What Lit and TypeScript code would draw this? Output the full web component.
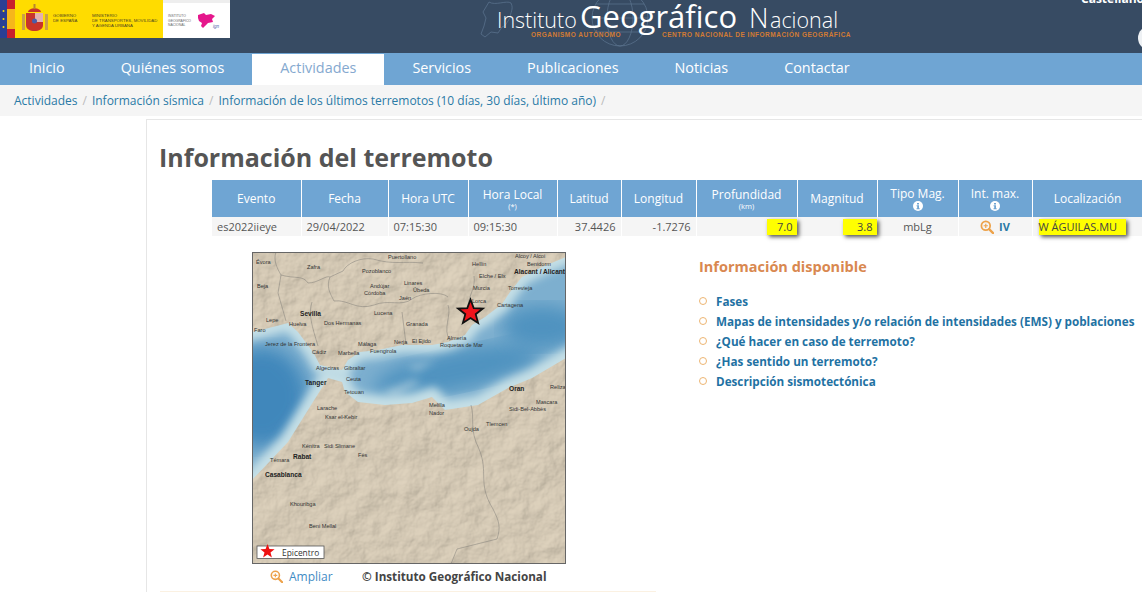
import { LitElement, html, css, svg } from 'lit';
import { customElement } from 'lit/decorators.js';

const NAV = ['Inicio', 'Quiénes somos', 'Actividades', 'Servicios', 'Publicaciones', 'Noticias', 'Contactar'];
const LINKS = [
  'Fases',
  'Mapas de intensidades y/o relación de intensidades (EMS) y poblaciones',
  '¿Qué hacer en caso de terremoto?',
  '¿Has sentido un terremoto?',
  'Descripción sismotectónica',
];
const CRUMBS = ['Actividades', 'Información sísmica', 'Información de los últimos terremotos (10 días, 30 días, último año)'];

// name, x, baseline, bold
const PLACES: [string, number, number, boolean?][] = [
  ['Évora', 4, 12], ['Zafra', 55, 17], ['Puertollano', 136, 7], ['Pozoblanco', 110, 21],
  ['Hellín', 220, 14], ['Alcoy / Alcoi', 263, 6], ['Benidorm', 275, 14], ['Elche / Elx', 227, 26],
  ['Alacant / Alicante', 262, 22, true], ['Beja', 5, 36], ['Andújar', 118, 36], ['Linares', 152, 33],
  ['Úbeda', 161, 40], ['Córdoba', 112, 43], ['Murcia', 221, 38], ['Torrevieja', 256, 38],
  ['Jaén', 147, 48], ['Lorca', 220, 51], ['Cartagena', 245, 55], ['Sevilla', 48, 64, true],
  ['Lucena', 122, 63], ['Dos Hermanas', 72, 73], ['Lepe', 14, 70], ['Huelva', 37, 74], ['Faro', 2, 80],
  ['Granada', 154, 74], ['Almería', 195, 88], ['Nerja', 142, 92], ['El Ejido', 160, 91],
  ['Roquetas de Mar', 188, 95], ['Jerez de la Frontera', 13, 94], ['Málaga', 106, 94], ['Cádiz', 60, 102],
  ['Marbella', 86, 103], ['Fuengirola', 118, 101], ['Algeciras', 64, 118], ['Gibraltar', 92, 118],
  ['Tanger', 53, 133, true], ['Ceuta', 94, 129], ['Tetouan', 92, 142], ['Oran', 257, 139, true],
  ['Relizane', 298, 137], ['Melilla', 177, 155], ['Nador', 177, 163], ['Mascara', 284, 152],
  ['Sidi-Bel-Abbès', 257, 159], ['Larache', 65, 158], ['Ksar el-Kebir', 73, 167], ['Tlemcen', 234, 174],
  ['Oujda', 212, 179], ['Kénitra', 50, 196], ['Sidi Slimane', 72, 196], ['Rabat', 41, 207, true],
  ['Fès', 106, 205], ['Témara', 18, 210], ['Casablanca', 13, 225, true], ['Khouribga', 38, 254],
  ['Beni Mellal', 57, 276],
];

const SPAIN = '0,80 13,77 36,71 46,80 61,100 68,113 90,118 96,108 108,100 126,98 150,93 180,93 196,90 213,83 220,73 233,65 250,52 258,40 270,25 290,15 314,5 314,0 0,0';
const AFRICA = '0,228 36,190 61,150 76,126 90,130 93,140 106,150 133,153 160,151 180,145 193,158 226,153 256,136 280,126 314,106 314,312 0,312';

function starPoints(cx: number, cy: number, r: number) {
  const pts: string[] = [];
  for (let i = 0; i < 10; i++) {
    const rad = i % 2 ? r * 0.42 : r;
    const a = -Math.PI / 2 + (i * Math.PI) / 5;
    pts.push(`${(cx + rad * Math.cos(a)).toFixed(1)},${(cy + rad * Math.sin(a)).toFixed(1)}`);
  }
  return pts.join(' ');
}

const zoomIcon = (size: number) => html`<svg width=${size} height=${size} viewBox="0 0 16 16" fill="none" stroke="#eda24a">
  <circle cx="6.6" cy="6.6" r="5" stroke-width="2"></circle>
  <path d="M10.4 10.4 15 15" stroke-width="2.6" stroke-linecap="round"></path>
  <path d="M4.2 6.6h4.8M6.6 4.2V9" stroke-width="1.3"></path>
</svg>`;

const infoIcon = html`<svg class="info" width="10" height="10" viewBox="0 0 10 10">
  <circle cx="5" cy="5" r="5" fill="#fff"></circle>
  <path d="M4 2h2v1.5H4zM3.6 4.3H6v3h.7v1H3.5v-1h.7v-2h-.6z" fill="#6fa5d3"></path>
</svg>`;

@customElement('app-root')
export class AppRoot extends LitElement {
  static styles = css`
    :host {
      display: block;
      width: 1142px;
      height: 592px;
      overflow: hidden;
      background: #fff;
      font-family: 'Open Sans', 'Liberation Sans', sans-serif;
      color: #555;
    }

    .top {
      height: 53px;
      background: #374b63;
      display: flex;
      overflow: hidden;
    }

    .logo {
      width: 230px;
      height: 38px;
      flex: none;
      display: block;
    }

    .logo text {
      font-family: 'Liberation Sans', sans-serif;
    }

    .brand {
      flex: none;
      width: 420px;
      height: 53px;
      margin-left: 250px;
      display: block;
    }

    .lang {
      margin-left: auto;
      width: 61px;
      flex: none;
      color: #fff;
      font-size: 12px;
      font-weight: 700;
      line-height: 12px;
      margin-top: -7px;
      white-space: nowrap;
    }

    .globe {
      display: block;
      margin: 21px 0 0 57px;
      width: 12px;
      height: 24px;
      border-radius: 12px 0 0 12px;
      border-left: 4px solid #eef1f4;
      box-sizing: border-box;
    }

    nav {
      height: 32px;
      background: #6fa5d3;
      display: flex;
      padding-left: 1px;
    }

    nav a {
      padding: 0 28px;
      margin-top: 1px;
      height: 31px;
      line-height: 28px;
      font-size: 14.4px;
      color: #fff;
    }

    nav a.on {
      background: #fff;
      color: #85a9cf;
    }

    .crumbs {
      height: 31px;
      background: #f5f5f5;
      display: flex;
      align-items: center;
      padding-left: 14px;
      font-size: 12px;
      color: #2a7aa6;
      white-space: nowrap;
    }

    .crumbs i {
      font-style: normal;
      color: #bbb;
      padding: 0 5px;
    }

    .card {
      margin: 3px 0 0 146px;
      border-top: 1px solid #e6e6e6;
      border-left: 1px solid #e6e6e6;
      padding: 0 0 0 12px;
      height: 473px;
      box-sizing: border-box;
      position: relative;
    }

    h1 {
      margin: 0;
      padding-top: 21px;
      font-size: 25px;
      line-height: 32px;
      font-weight: 700;
      color: #555;
      height: 39px;
      white-space: nowrap;
    }

    table {
      margin: 0 0 0 53px;
      table-layout: fixed;
      width: 931px;
      border-collapse: collapse;
      font-size: 11px;
    }

    th {
      height: 37px;
      padding: 0;
      background: #6fa5d3;
      color: #fff;
      font-weight: 400;
      font-size: 12px;
      line-height: 15px;
      border-right: 1px solid #fff;
      text-align: center;
      vertical-align: middle;
    }

    th small {
      display: block;
      font-size: 7.5px;
      line-height: 9px;
    }

    .info {
      display: block;
      margin: 0 auto;
    }

    td {
      height: 19px;
      padding: 0 5px;
      background: #f5f5f5;
      border-right: 1px solid #fff;
      color: #555;
      line-height: 19px;
      white-space: nowrap;
      box-sizing: border-box;
    }

    td.num {
      text-align: right;
    }

    td.mid {
      text-align: center;
    }

    td.hl {
      padding: 0;
      text-align: right;
      line-height: 16px;
      overflow: visible;
    }

    .mark {
      display: inline-block;
      background: #ffff00;
      box-shadow: 2px 2px 4px #555;
      height: 16px;
      line-height: 16px;
      padding: 0 4px 0 10px;
      color: #444;
      vertical-align: middle;
    }

    .mark.wide {
      padding: 0 9px 0 0;
      margin-left: 6px;
    }

    td.hl.left {
      text-align: left;
    }

    .int {
      display: flex;
      align-items: center;
      justify-content: center;
      gap: 5px;
      font-weight: 700;
      color: #2a7aa6;
    }

    .body {
      display: flex;
      margin-top: 16px;
    }

    .left {
      width: 497px;
      flex: none;
      padding-left: 93px;
      box-sizing: border-box;
    }

    .map {
      display: block;
      width: 314px;
      height: 312px;
      box-sizing: content-box;
    }

    .map text {
      font-family: 'Liberation Sans', sans-serif;
      font-size: 5.6px;
      fill: #333;
    }

    .map text.b {
      font-weight: 700;
      font-size: 6.6px;
      fill: #222;
    }

    .map text.legend {
      font-family: 'Open Sans', sans-serif;
      font-size: 8.4px;
    }

    .caption {
      display: flex;
      align-items: center;
      margin: 2px 0 0 18px;
      height: 20px;
      font-size: 12px;
    }

    .caption a {
      color: #3f8cc4;
      margin-left: 6px;
      width: 73px;
    }

    .caption b {
      color: #444;
      font-size: 11.7px;
    }

    .side {
      padding-left: 43px;
      white-space: nowrap;
    }

    h2 {
      margin: 4px 0 0;
      font-size: 14.5px;
      line-height: 22px;
      font-weight: 700;
      color: #d98850;
    }

    ul {
      list-style: none;
      margin: 13px 0 0;
      padding: 0;
    }

    li {
      height: 20px;
      display: flex;
      align-items: center;
      font-size: 11.7px;
      font-weight: 700;
      color: #1f72a3;
    }

    li::before {
      content: '';
      width: 8px;
      height: 8px;
      box-sizing: border-box;
      border: 1.5px solid #edb572;
      border-radius: 50%;
      margin-right: 9px;
    }

    .rule {
      position: absolute;
      left: 13px;
      bottom: 0;
      width: 496px;
      height: 1px;
      background: #fbf1e2;
    }
  `;

  renderLogo() {
    return html`<svg class="logo" viewBox="0 0 230 38">
      <rect width="230" height="38" fill="#fff"></rect>
      <rect y="0" x="163" width="67" height="3" fill="#eee"></rect>
      <rect width="163" height="38" fill="#ffdc00"></rect>
      <rect width="7" height="38" fill="#2b3f94"></rect>
      <rect x="7" width="8" height="38" fill="#c8202d"></rect>
      <rect x="7" y="9" width="8" height="20" fill="#f6b61b"></rect>
      <g fill="#ffdc00">
        <circle cx="3.5" cy="11" r="1"></circle><circle cx="3.5" cy="19" r="1"></circle><circle cx="3.5" cy="27" r="1"></circle>
      </g>
      <rect x="22" y="14" width="3" height="16" fill="#c9a04b"></rect>
      <rect x="45" y="14" width="3" height="16" fill="#c9a04b"></rect>
      <path d="M26 13h17v12c0 4-4 6-8.500 6S26 29 26 25z" fill="#c8342b"></path>
      <path d="M35 13h8v9h-8z" fill="#e3b0b0"></path>
      <circle cx="34.500" cy="21" r="2.500" fill="#4a5ca8"></circle>
      <path d="M28 12c1-5 12-5 13 0z" fill="#c8342b"></path>
      <rect x="33.500" y="4" width="2" height="5" fill="#b8862d"></rect>
      <g fill="#4b4320" font-size="4.300">
        <text x="53" y="17">GOBIERNO</text>
        <text x="53" y="22">DE ESPAÑA</text>
        <text x="92" y="17">MINISTERIO</text>
        <text x="92" y="22">DE TRANSPORTES, MOVILIDAD</text>
        <text x="92" y="27">Y AGENDA URBANA</text>
      </g>
      <g fill="#666" font-size="3.400">
        <text x="168" y="17">INSTITUTO</text>
        <text x="168" y="21.500">GEOGRÁFICO</text>
        <text x="168" y="26">NACIONAL</text>
      </g>
      <path d="M198 15l6-2 2 2 5-1 4 2-3 3 1 3-5 1-3 3-2 2-2-2 1-3-3-2-1-3z" fill="#e5178c"></path>
      <text x="213" y="28" fill="#4a5ca8" font-size="4.500" font-style="italic">ign</text>
    </svg>`;
  }

  renderBrand() {
    return html`<svg class="brand" viewBox="0 0 420 53">
      <g fill="none" stroke="#5d7690" stroke-width="0.700">
        <path d="M9 2c6 4 18-2 22 1 3 6-1 10-1 15-3 4-4 8-8 9l-4 6-7-1-6 5-4-3 3-8 2-8-3-6z"></path>
        <circle cx="140" cy="18" r="28"></circle>
        <ellipse cx="140" cy="18" rx="13" ry="28"></ellipse>
        <path d="M112 18h56M116 4h48M116 32h48"></path>
      </g>
      <g fill="#fff" font-family="Open Sans, sans-serif" font-weight="300">
        <text x="17" y="28" font-size="21.500">Instituto</text>
        <text x="100" y="28" font-size="31" font-weight="400">Geográfico</text>
        <text x="269" y="28" font-size="27">N</text>
        <text x="290" y="28" font-size="21.500">acional</text>
      </g>
      <g fill="#d27b34" font-family="Liberation Sans, sans-serif" font-weight="700" font-size="6.500" letter-spacing="0.500">
        <text x="51" y="36.500">ORGANISMO AUTÓNOMO</text>
        <text x="182" y="36.500">CENTRO NACIONAL  DE  INFORMACIÓN  GEOGRÁFICA</text>
      </g>
    </svg>`;
  }

  renderMap() {
    return html`<svg class="map" viewBox="0 0 314 312">
      <defs>
        <filter id="relief" x="0" y="0" width="1" height="1">
          <feTurbulence type="fractalNoise" baseFrequency="0.04" numOctaves="5" seed="7" result="n"></feTurbulence>
          <feDiffuseLighting in="n" surfaceScale="2.600" diffuseConstant="1.100" lighting-color="#d6cab6" result="l">
            <feDistantLight azimuth="225" elevation="62"></feDistantLight>
          </feDiffuseLighting>
          <feComposite in="l" in2="SourceAlpha" operator="in"></feComposite>
        </filter>
        <filter id="soft"><feGaussianBlur stdDeviation="4"></feGaussianBlur></filter>
        <filter id="softer"><feGaussianBlur stdDeviation="9"></feGaussianBlur></filter>
        <clipPath id="frame"><rect width="314" height="312"></rect></clipPath>
      </defs>
      <g clip-path="url(#frame)">
        <rect width="314" height="312" fill="#7dafcf"></rect>
        <ellipse cx="10" cy="145" rx="45" ry="50" fill="#3f87bb" filter="url(#softer)"></ellipse>
        <ellipse cx="205" cy="118" rx="85" ry="20" fill="#4f93c0" filter="url(#softer)" transform="rotate(-12 205 118)"></ellipse>
        <ellipse cx="290" cy="75" rx="40" ry="22" fill="#4f93c0" filter="url(#softer)"></ellipse>
        <path d="M130 140l30-12 10 2-28 16zM155 115l30-8-20 12z" fill="#b6d3e0" opacity="0.700" filter="url(#soft)"></path>
        <polygon points=${SPAIN} fill="none" stroke="#c5dfe6" stroke-width="16" filter="url(#soft)"></polygon>
        <polygon points=${AFRICA} fill="none" stroke="#c5dfe6" stroke-width="18" filter="url(#soft)"></polygon>
        <polygon points=${SPAIN} fill="#d6cab6" filter="url(#relief)"></polygon>
        <polygon points=${AFRICA} fill="#d6cab6" filter="url(#relief)"></polygon>
        <g fill="none" stroke="#6b6b68" stroke-width="0.500" opacity="0.800">
          <path d="M24 0c-3 8 1 16 5 23l-3 18 8 28"></path>
          <path d="M29 23c14 4 22 0 27 8 10 0 18-8 22-6l13-6c4-8 18-14 30-12 20 6 30 2 50 4"></path>
          <path d="M78 25c-4 10 0 16 4 24 14-2 22 10 40 4 14-6 28 2 38-6 8-6 30-8 36-2"></path>
          <path d="M196 53c4 10-6 24 2 36M222 24c2 12-6 20-6 32M60 50c-4 12 0 24 6 44M150 60l4 32"></path>
          <path d="M219 153c4 14-2 24 8 44 10 24-2 34 14 60 6 12 8 18 4 30l-40 10-6 15"></path>
        </g>
        ${PLACES.map(
          ([name, x, y, bold]) => svg`<text class=${bold ? 'b' : ''} x=${x} y=${y}>${name}</text>`
        )}
        <polygon points=${starPoints(218.5, 60.5, 13)} fill="#f0141c" stroke="#111" stroke-width="1.800" stroke-linejoin="miter"></polygon>
        <rect x="5" y="294" width="67" height="12.500" fill="#fff" stroke="#555" stroke-width="0.800"></rect>
        <polygon points=${starPoints(15.5, 299.5, 7.5)} fill="#ee1111"></polygon>
        <text class="legend" x="30" y="304">Epicentro</text>
      </g>
      <rect x="0.500" y="0.500" width="313" height="311" fill="none" stroke="#666"></rect>
    </svg>`;
  }

  render() {
    return html`
      <div class="top">
        ${this.renderLogo()} ${this.renderBrand()}
        <div class="lang">Castellano<span class="globe"></span></div>
      </div>
      <nav>${NAV.map((n) => html`<a class=${n === 'Actividades' ? 'on' : ''}>${n}</a>`)}</nav>
      <div class="crumbs">${CRUMBS.map((c) => html`<span>${c}</span><i>/</i>`)}</div>
      <div class="card">
        <h1>Información del terremoto</h1>
        <table>
          <colgroup>
            ${[89, 87, 80, 89, 64, 75, 101, 80, 81, 74, 111].map((w) => html`<col style="width:${w}px" />`)}
          </colgroup>
          <tr>
            <th>Evento</th>
            <th>Fecha</th>
            <th>Hora UTC</th>
            <th>Hora Local<small>(*)</small></th>
            <th>Latitud</th>
            <th>Longitud</th>
            <th>Profundidad<small>(km)</small></th>
            <th>Magnitud</th>
            <th>Tipo Mag.${infoIcon}</th>
            <th>Int. max.${infoIcon}</th>
            <th>Localización</th>
          </tr>
          <tr>
            <td>es2022iieye</td>
            <td>29/04/2022</td>
            <td>07:15:30</td>
            <td>09:15:30</td>
            <td class="num">37.4426</td>
            <td class="num">-1.7276</td>
            <td class="hl"><span class="mark">7.0</span></td>
            <td class="hl"><span class="mark" style="padding-left:14px">3.8</span></td>
            <td class="mid">mbLg</td>
            <td><div class="int">${zoomIcon(14)}IV</div></td>
            <td class="hl left"><span class="mark wide">W ÁGUILAS.MU</span></td>
          </tr>
        </table>
        <div class="body">
          <div class="left">
            ${this.renderMap()}
            <div class="caption">
              ${zoomIcon(13)}
              <a>Ampliar</a>
              <b>© Instituto Geográfico Nacional</b>
            </div>
          </div>
          <div class="side">
            <h2>Información disponible</h2>
            <ul>${LINKS.map((l) => html`<li>${l}</li>`)}</ul>
          </div>
        </div>
        <div class="rule"></div>
      </div>
    `;
  }
}
